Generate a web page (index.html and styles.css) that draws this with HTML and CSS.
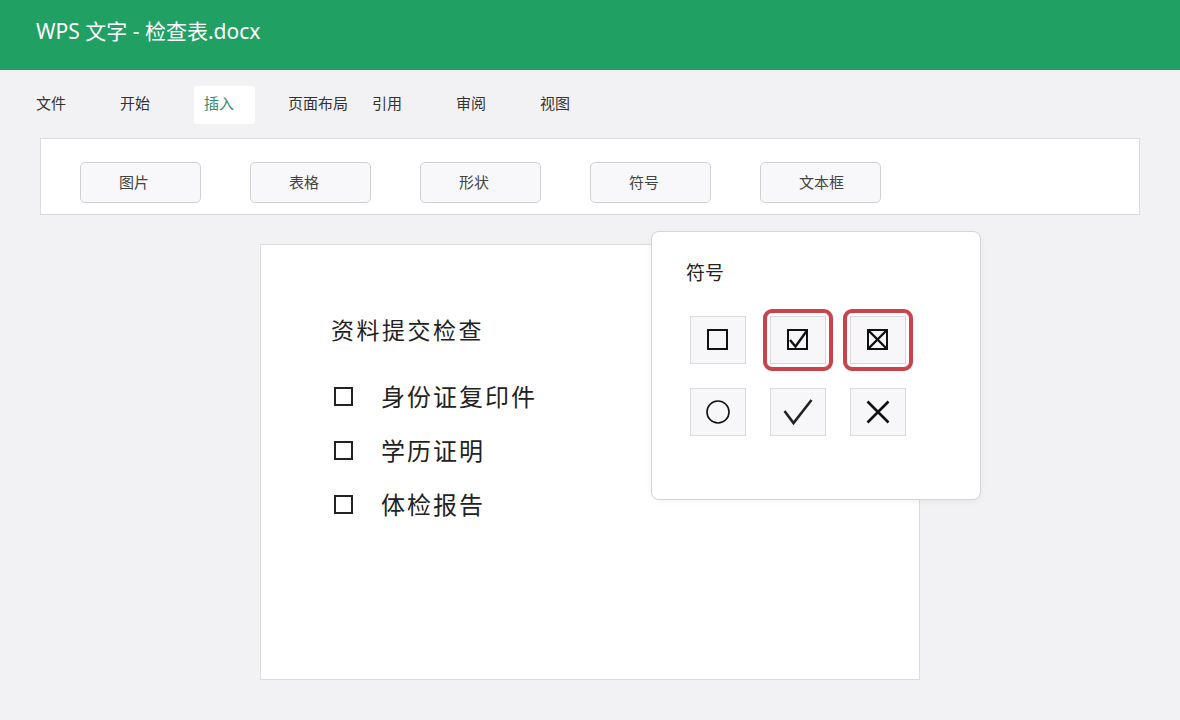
FILE: index.html
```html
<!DOCTYPE html>
<html lang="zh-CN">
  <head>
    <meta charset="UTF-8" />
    <meta name="viewport" content="width=device-width, initial-scale=1.0" />
    <title>WPS 文字 - 检查表.docx</title>
    <link rel="stylesheet" href="styles.css">
  </head>
  <body>
    <header class="titlebar">WPS 文字 - 检查表.docx</header>

    <nav class="menu">
      <span class="menu-item">文件</span>
      <span class="menu-item">开始</span>
      <span class="menu-item active">插入</span>
      <span class="menu-item">页面布局</span>
      <span class="menu-item">引用</span>
      <span class="menu-item">审阅</span>
      <span class="menu-item">视图</span>
    </nav>

    <div class="toolbar">
      <button type="button" class="tool">图片</button>
      <button type="button" class="tool">表格</button>
      <button type="button" class="tool">形状</button>
      <button type="button" class="tool">符号</button>
      <button type="button" class="tool">文本框</button>
    </div>

    <main class="workspace">
      <div class="page">
        <h2 class="doc-title">资料提交检查</h2>
        <ul class="checklist">
          <li><span class="box"></span>身份证复印件</li>
          <li><span class="box"></span>学历证明</li>
          <li><span class="box"></span>体检报告</li>
        </ul>
      </div>

      <div class="symbol-panel">
        <div class="panel-title">符号</div>
        <div class="symbol-grid">
          <div class="cell">
            <svg width="26" height="26" viewBox="0 0 26 26">
              <rect x="3" y="3" width="19" height="19" fill="none" stroke="#111" stroke-width="2"/>
            </svg>
          </div>
          <div class="cell marked">
            <svg width="26" height="26" viewBox="0 0 26 26">
              <rect x="3" y="3" width="19" height="19" fill="none" stroke="#111" stroke-width="2"/>
              <path d="M5 13 L10.5 19.5 L22 3.5" fill="none" stroke="#111" stroke-width="2.4"/>
            </svg>
          </div>
          <div class="cell marked">
            <svg width="26" height="26" viewBox="0 0 26 26">
              <rect x="3" y="3" width="19" height="19" fill="none" stroke="#111" stroke-width="2"/>
              <path d="M3.5 3.5 L21.5 21.5 M21.5 3.5 L3.5 21.5" fill="none" stroke="#111" stroke-width="2.4"/>
            </svg>
          </div>
          <div class="cell">
            <svg width="26" height="26" viewBox="0 0 26 26">
              <circle cx="13" cy="13" r="11" fill="none" stroke="#111" stroke-width="1.6"/>
            </svg>
          </div>
          <div class="cell">
            <svg width="30" height="28" viewBox="0 0 30 28">
              <path d="M1.5 13 L10.5 25 L28.5 2" fill="none" stroke="#222" stroke-width="2.6"/>
            </svg>
          </div>
          <div class="cell">
            <svg width="26" height="26" viewBox="0 0 26 26">
              <path d="M2.5 2.5 L23.5 23.5 M23.5 2.5 L2.5 23.5" fill="none" stroke="#111" stroke-width="2.6"/>
            </svg>
          </div>
        </div>
      </div>
    </main>
  </body>
</html>
```

FILE: styles.css
```css
body {
  font-family: "Noto Sans", "Noto Sans CJK SC", sans-serif;
  background-color: #f2f2f4;
  color: #222;
  margin: 0;
  padding: 0;
}
.titlebar {
  height: 70px;
  box-sizing: border-box;
  padding: 17px 36px 0;
  background-color: #21a063;
  color: #fff;
  font-size: 21px;
  line-height: 28px;
}
.menu {
  display: flex;
  gap: 23px;
  padding: 16px 26px 0;
}
.menu-item {
  width: 61px;
  height: 38px;
  box-sizing: border-box;
  padding-left: 10px;
  font-family: "Noto Sans CJK SC", sans-serif;
  font-size: 15px;
  line-height: 34px;
  color: #333;
  white-space: nowrap;
}
.menu-item.active {
  background: #fff;
  color: #3b8c6c;
  border-radius: 3px;
}
.toolbar {
  margin: 14px 40px 0;
  height: 77px;
  box-sizing: border-box;
  padding: 23px 39px 0;
  display: flex;
  gap: 49px;
  background: #fff;
  border: 1px solid #dcdcdf;
}
.tool {
  width: 121px;
  height: 41px;
  padding: 0 0 3px 38px;
  text-align: left;
  background: #f8f8fa;
  border: 1px solid #d2d2d6;
  border-radius: 5px;
  font-family: "Noto Sans CJK SC", sans-serif;
  font-size: 15px;
  color: #444;
  cursor: pointer;
}
.workspace {
  position: relative;
  padding-top: 29px;
}
.page {
  width: 660px;
  height: 436px;
  box-sizing: border-box;
  margin: 0 auto;
  padding: 68px 0 0 70px;
  background: #fff;
  border: 1px solid #dcdcdf;
  font-family: "Noto Sans CJK SC", sans-serif;
}
.doc-title {
  margin: 0;
  font-size: 23px;
  font-weight: normal;
  line-height: 32px;
  letter-spacing: 2.5px;
  color: #222;
}
.checklist {
  list-style: none;
  margin: 23px 0 0;
  padding: 0;
}
.checklist li {
  display: flex;
  align-items: center;
  height: 54px;
  font-size: 24px;
  letter-spacing: 2px;
  color: #222;
}
.box {
  width: 19px;
  height: 19px;
  box-sizing: border-box;
  border: 2px solid #222;
  margin: 3px 28px 0 3px;
}
.symbol-panel {
  position: absolute;
  left: 651px;
  top: 16px;
  width: 330px;
  height: 269px;
  box-sizing: border-box;
  padding: 26px 0 0 38px;
  background: #fff;
  border: 1px solid #d5d5d9;
  border-radius: 8px;
  box-shadow: 0 2px 6px rgba(0, 0, 0, 0.05);
  font-family: "Noto Sans CJK SC", sans-serif;
}
.panel-title {
  margin-left: -4px;
  font-size: 19px;
  line-height: 28px;
  color: #222;
}
.symbol-grid {
  display: grid;
  grid-template-columns: repeat(3, 56px);
  grid-auto-rows: 48px;
  gap: 24px;
  margin-top: 30px;
}
.cell {
  position: relative;
  display: flex;
  align-items: center;
  justify-content: center;
  background: #f7f7f9;
  border: 1px solid #dadade;
}
.cell.marked::after {
  content: "";
  position: absolute;
  inset: -8px;
  border: 4px solid #c9434a;
  border-radius: 9px;
}
```
